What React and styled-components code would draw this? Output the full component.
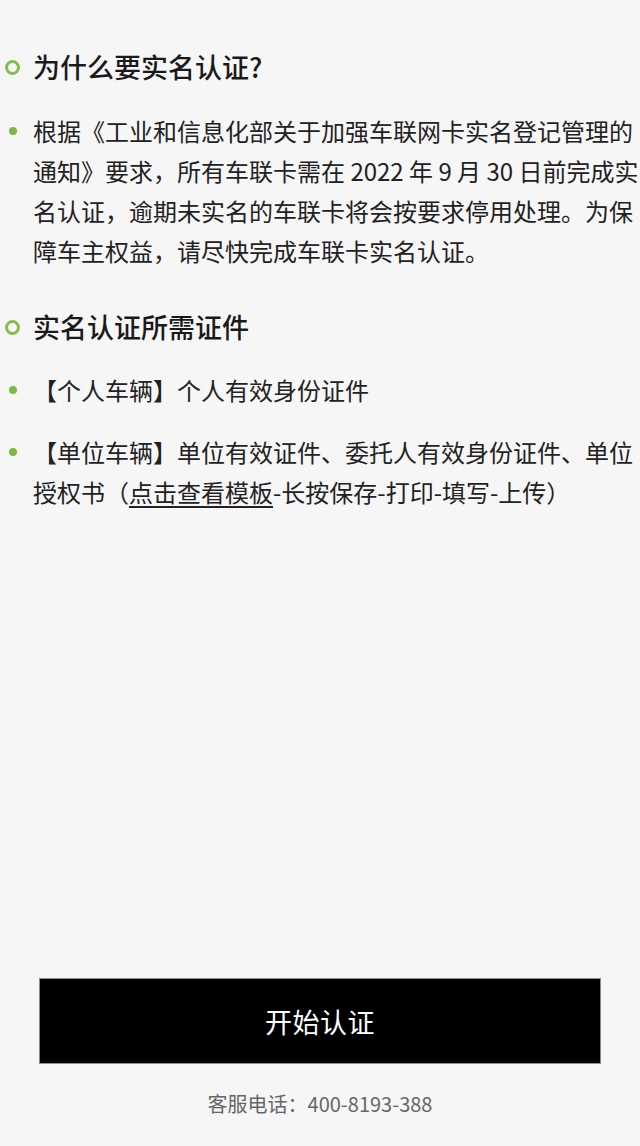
import React from "react";
import styled, { createGlobalStyle } from "styled-components";

const GlobalStyle = createGlobalStyle`
  html, body {
    margin: 0;
    padding: 0;
    background: #f6f6f6;
  }
  body {
    font-family: "Noto Sans CJK SC", "Noto Sans", sans-serif;
    color: #1c1c1c;
  }
`;

const Page = styled.div`
  min-height: 100vh;
  display: flex;
  flex-direction: column;
  box-sizing: border-box;
  padding-bottom: 29px;
  overflow: hidden;
`;

const Main = styled.main`
  flex: 1;
  padding-top: 47px;
  display: flex;
  flex-direction: column;
  gap: 36px;
`;

const Section = styled.section`
  display: flex;
  flex-direction: column;
`;

const Row = styled.div`
  display: flex;
  align-items: flex-start;
  margin-bottom: ${({ $gap }) => $gap || 0}px;
`;

const Marker = styled.span`
  flex: 0 0 33px;
  height: 40px;
  display: flex;
  align-items: center;
  padding-left: ${({ $ring }) => ($ring ? 5 : 9)}px;
  box-sizing: border-box;
`;

const Ring = styled.span`
  width: 15px;
  height: 15px;
  border: 3px solid #86bd4c;
  border-radius: 50%;
  box-sizing: border-box;
`;

const Dot = styled.span`
  width: 8px;
  height: 8px;
  border-radius: 50%;
  background: #7fb84a;
  margin-top: -1px;
`;

const Heading = styled.h2`
  margin: 0;
  font-size: 27px;
  line-height: 40px;
  font-weight: 500;
  color: #1a1a1a;
  white-space: nowrap;
`;

const Text = styled.p`
  margin: 0;
  font-size: 24px;
  line-height: 40px;
  font-weight: 400;
  color: #222;
  white-space: nowrap;
`;

const Link = styled.span`
  text-decoration: underline;
  text-underline-offset: 4px;
`;

const Bottom = styled.footer`
  display: flex;
  flex-direction: column;
  align-items: center;
`;

const StartButton = styled.button`
  width: 562px;
  height: 86px;
  background: #000;
  border: 1px solid #8a8a8a;
  color: #fff;
  font-family: "Noto Sans CJK SC", sans-serif;
  font-size: 27px;
  font-weight: 400;
  letter-spacing: 0.5px;
  cursor: pointer;
`;

const Hotline = styled.div`
  margin-top: 27px;
  font-size: 20px;
  line-height: 26px;
  color: #666;
`;

export default function App() {
  return (
    <>
      <GlobalStyle />
      <Page>
        <Main>
          <Section>
            <Row $gap={24}>
              <Marker $ring>
                <Ring />
              </Marker>
              <Heading>为什么要实名认证?</Heading>
            </Row>
            <Row>
              <Marker>
                <Dot />
              </Marker>
              <Text>
                根据《工业和信息化部关于加强车联网卡实名登记管理的
                <br />
                通知》要求，所有车联卡需在 2022 年 9 月 30 日前完成实
                <br />
                名认证，逾期未实名的车联卡将会按要求停用处理。为保
                <br />
                障车主权益，请尽快完成车联卡实名认证。
              </Text>
            </Row>
          </Section>
          <Section>
            <Row $gap={23}>
              <Marker $ring>
                <Ring />
              </Marker>
              <Heading>实名认证所需证件</Heading>
            </Row>
            <Row $gap={22}>
              <Marker>
                <Dot />
              </Marker>
              <Text>【个人车辆】个人有效身份证件</Text>
            </Row>
            <Row>
              <Marker>
                <Dot />
              </Marker>
              <Text>
                【单位车辆】单位有效证件、委托人有效身份证件、单位
                <br />
                授权书（<Link>点击查看模板</Link>-长按保存-打印-填写-上传）
              </Text>
            </Row>
          </Section>
        </Main>
        <Bottom>
          <StartButton>开始认证</StartButton>
          <Hotline>客服电话：400-8193-388</Hotline>
        </Bottom>
      </Page>
    </>
  );
}
